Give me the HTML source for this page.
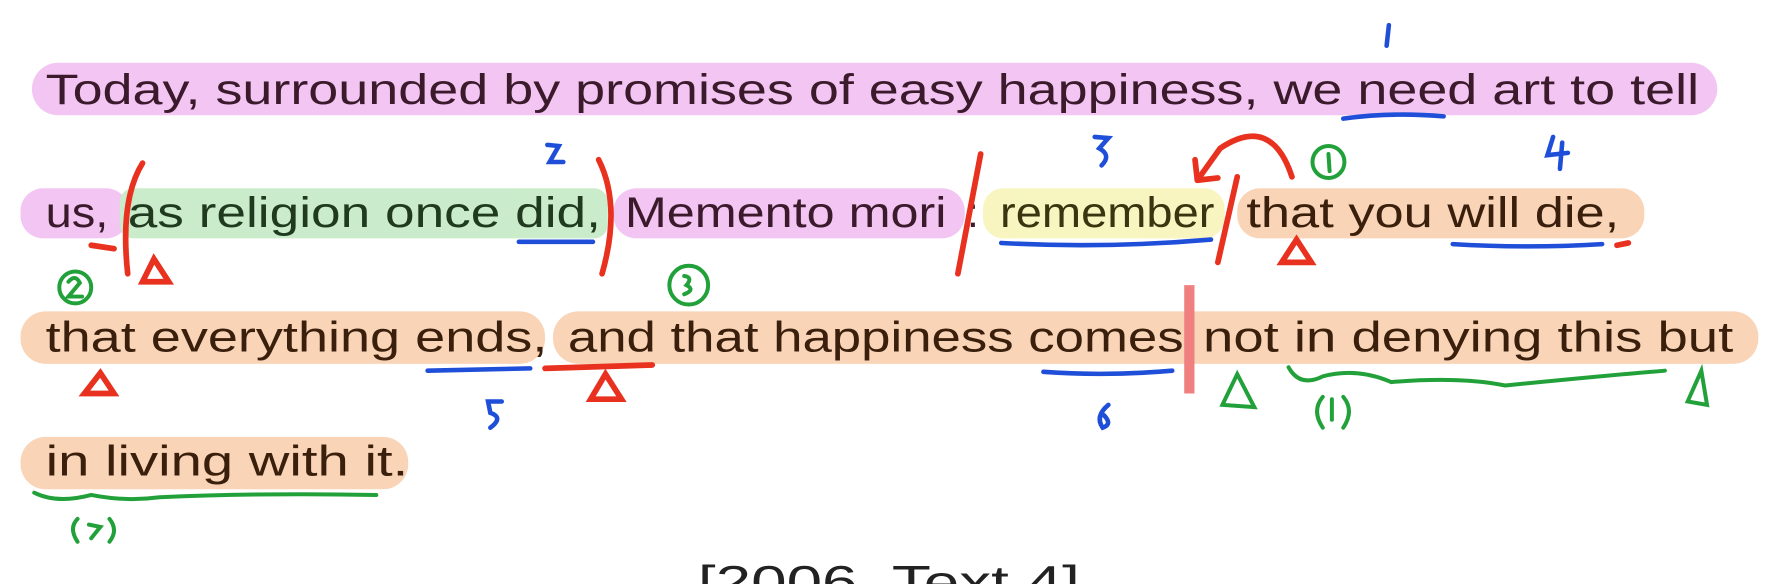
<!DOCTYPE html>
<html><head><meta charset="utf-8"><style>
html,body{margin:0;padding:0;background:#fff;width:1788px;height:584px;overflow:hidden}
svg{display:block}
text{font-family:"Liberation Sans","DejaVu Sans",sans-serif}
</style></head><body>
<svg width="1788" height="584" viewBox="0 0 1568 512" xmlns="http://www.w3.org/2000/svg">
<g opacity="0.95">
<rect x="28" y="55" width="1478" height="46" rx="23" fill="#f2c2f2"/>
<rect x="18" y="165" width="95" height="44" rx="20" fill="#f2c2f2"/>
<rect x="105" y="165" width="428" height="44" rx="12" fill="#c8ebc9"/>
<rect x="538" y="165" width="308" height="44" rx="20" fill="#f2c2f2"/>
<rect x="862" y="165" width="212" height="44" rx="18" fill="#f8f5bd"/>
<rect x="1085" y="165" width="357" height="44" rx="20" fill="#f9d2b3"/>
<rect x="18" y="273" width="460" height="46" rx="22" fill="#f9d2b3"/>
<rect x="485" y="273" width="1057" height="46" rx="22" fill="#f9d2b3"/>
<rect x="18" y="383" width="340" height="46" rx="22" fill="#f9d2b3"/>
</g>
<g fill="#3b1a2c" font-size="37" stroke="currentColor" stroke-width="0">
<text x="40" y="91" textLength="1450" lengthAdjust="spacingAndGlyphs">Today, surrounded by promises of easy happiness, we need art to tell</text>
<text x="40" y="199" textLength="55" lengthAdjust="spacingAndGlyphs">us,</text>
<text x="112" y="199" fill="#1f3a1f" textLength="415" lengthAdjust="spacingAndGlyphs">as religion once did,</text>
<text x="548" y="199" textLength="282" lengthAdjust="spacingAndGlyphs">Memento mori</text>
<text x="848" y="199">:</text>
<text x="877" y="199" fill="#3a3410" textLength="188" lengthAdjust="spacingAndGlyphs">remember</text>
<text x="1093" y="199" fill="#3a200c" textLength="327" lengthAdjust="spacingAndGlyphs">that you will die,</text>
<text x="40" y="308" fill="#3a200c" textLength="440" lengthAdjust="spacingAndGlyphs">that everything ends,</text>
<text x="498" y="308" fill="#3a200c" textLength="540" lengthAdjust="spacingAndGlyphs">and that happiness comes</text>
<text x="1055" y="308" fill="#3a200c" textLength="465" lengthAdjust="spacingAndGlyphs">not in denying this but</text>
<text x="40" y="417" fill="#3a200c" textLength="318" lengthAdjust="spacingAndGlyphs">in living with it.</text>
<text x="612" y="524" fill="#222" font-size="40" textLength="335" lengthAdjust="spacingAndGlyphs">[2006, Text 4]</text>
</g>
<g fill="none" stroke-linecap="round" stroke-width="4">
<g stroke="#1f4fd8">
<path d="M1178 104 Q1220 98 1266 102"/>
<path d="M455 212 L520 212"/>
<path d="M878 213 Q970 218 1062 210"/>
<path d="M1274 214 Q1340 218 1405 214"/>
<path d="M375 325 L465 323"/>
<path d="M915 326 Q970 330 1028 325"/>
<path d="M1218 22 L1216 40"/>
<path d="M960 120 L972 121 L964 130 Q975 136 966 145"/>
<path d="M480 127 L490 128 L482 142 L494 142"/>
<path d="M1362 120 L1357 136 L1375 134 M1370 125 L1368 148"/>
<path d="M440 352 L428 352 L430 362 Q442 366 430 375"/>
<path d="M972 355 Q960 365 967 375 Q976 372 968 364"/>
</g>
<g stroke="#e8311e" stroke-width="5">
<path d="M125 143 Q105 175 112 240"/>
<path d="M80 215 L100 218"/>
<path d="M525 140 Q545 180 528 240"/>
<path d="M860 135 L840 240"/>
<path d="M1085 155 L1068 230"/>
<path d="M1133 155 Q1115 100 1070 130 L1050 158 M1050 158 L1048 140 M1050 158 L1068 156"/>
<path d="M478 323 L572 320"/>
<path d="M1418 215 L1428 213"/>
<path d="M135 227 L148 247 L125 247 Z"/>
<path d="M1137 210 L1150 230 L1124 230 Z"/>
<path d="M88 327 L100 345 L74 345 Z"/>
<path d="M531 328 L545 350 L518 350 Z"/>
</g>
<path d="M1043 250 L1043 345" stroke="#f08080" stroke-width="9" stroke-linecap="butt"/>
<g stroke="#22a13a" stroke-width="3.5">
<circle cx="66" cy="252" r="14"/>
<path d="M60 247 Q66 240 70 248 L60 260 L72 260"/>
<circle cx="604" cy="250" r="17"/>
<circle cx="1165" cy="142" r="14"/>
<path d="M1130 322 Q1140 340 1160 330 Q1190 322 1220 335 Q1280 330 1320 338 Q1400 330 1460 325"/>
<path d="M30 432 Q50 442 80 434 Q110 440 140 436 Q230 432 330 434"/>
<path d="M1085 328 L1072 355 L1100 357 Z"/>
<path d="M1492 325 L1480 352 L1497 355 Z"/>
<path d="M1160 348 Q1150 360 1160 375 M1168 350 L1168 368 M1178 348 Q1188 360 1178 375"/>
<path d="M68 455 Q60 463 68 475 M78 460 L88 462 L80 472 M96 455 Q104 465 96 475"/>
<path d="M1165 135 L1166 150"/>
<path d="M600 242 Q608 243 602 250 Q610 254 600 258"/>
</g>
</g>
</svg>
</body></html>
